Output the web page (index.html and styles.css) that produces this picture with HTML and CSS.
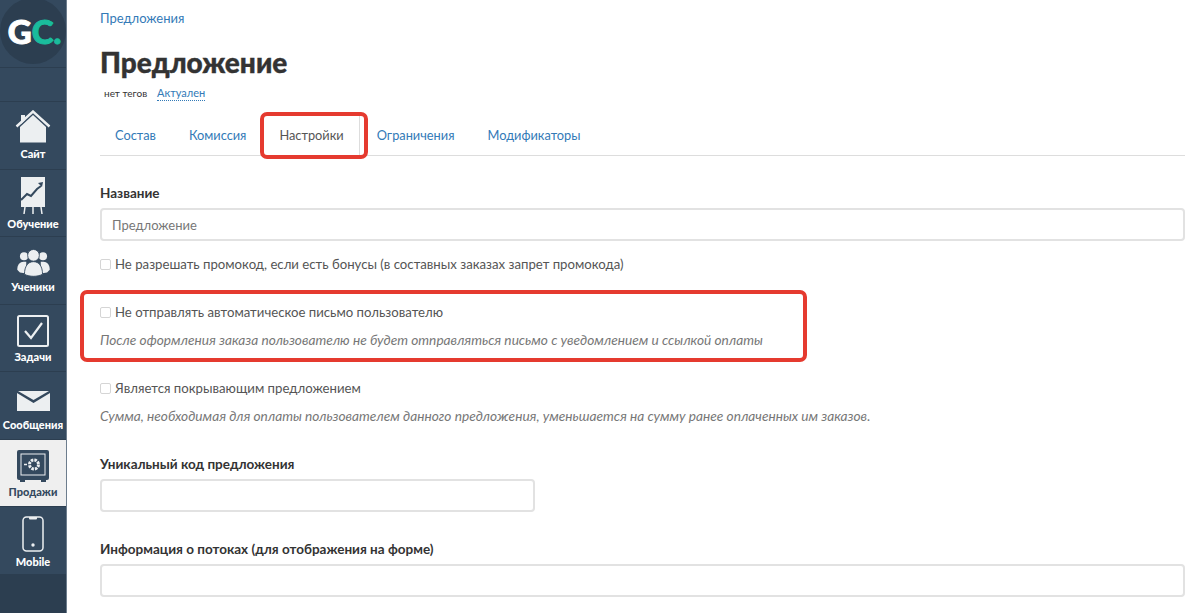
FILE: index.html
```html
<!DOCTYPE html>
<html lang="ru">
<head>
	<meta charset="utf-8">
	<title>Предложение</title>
	<link rel="stylesheet" href="styles.css">
</head>
<body>
	<nav class="sidebar">
		<div class="logo-cell">
			<div class="logo"><span class="logo-g">G</span><span class="logo-c">C.</span></div>
		</div>
		<div class="spacer-cell"></div>
		<a class="menu-item item-site">
			<svg class="menu-icon" width="36" height="34" viewBox="0 0 36 34">
				<path d="M6 5h4v5l-4 4z" fill="#eceff1"/>
				<path d="M1.500 16.500L18 1.500l16.500 15" fill="none" stroke="#eceff1" stroke-width="2.400"/>
				<path d="M5 17L18 5l13 12v15.500H5z" fill="#eceff1"/>
			</svg>
			<span>Сайт</span>
		</a>
		<a class="menu-item item-learn">
			<svg class="menu-icon" width="26" height="37" viewBox="0 0 26 37">
				<path d="M1 0h24v30H1z" fill="#eceff1"/>
				<path d="M1 23l6-6 4 2 6-7 4-3" fill="none" stroke="#34495e" stroke-width="2"/>
				<path d="M18 6l5-1-1 5z" fill="#34495e"/>
				<path d="M5 30l-1 7M13 30v7M21 30l1 7" stroke="#eceff1" stroke-width="1.500"/>
			</svg>
			<span>Обучение</span>
		</a>
		<a class="menu-item item-users">
			<svg class="menu-icon" width="33" height="28" viewBox="0 0 36 31">
				<circle cx="7.500" cy="8" r="4.500" fill="#eceff1"/>
				<circle cx="28.500" cy="8" r="4.500" fill="#eceff1"/>
				<path d="M0 23c0-6 3-9 7-9h3v13l-7-1z" fill="#eceff1"/>
				<path d="M36 23c0-6-3-9-7-9h-3v13l7-1z" fill="#eceff1"/>
				<circle cx="18" cy="7" r="6.500" fill="#eceff1" stroke="#34495e"/>
				<path d="M8 28c0-9 4-14 10-14s10 5 10 14c-6 3-14 3-20 0z" fill="#eceff1" stroke="#34495e"/>
			</svg>
			<span>Ученики</span>
		</a>
		<a class="menu-item item-tasks">
			<svg class="menu-icon" width="32" height="32" viewBox="0 0 32 32">
				<rect x="1" y="1" width="30" height="30" rx="1.500" fill="none" stroke="#eceff1" stroke-width="2"/>
				<path d="M8 16l6 7L25 8" fill="none" stroke="#eceff1" stroke-width="2.200"/>
			</svg>
			<span>Задачи</span>
		</a>
		<a class="menu-item item-mail">
			<svg class="menu-icon" width="33" height="20" viewBox="0 0 33 20">
				<path d="M1 0h31L16.500 9z" fill="#eceff1"/>
				<path d="M0 2l16.500 10L33 2v18H0z" fill="#eceff1"/>
			</svg>
			<span>Сообщения</span>
		</a>
		<a class="menu-item item-sales active">
			<svg class="menu-icon" width="32" height="32" viewBox="0 0 32 32">
				<rect width="32" height="30" rx="2" fill="#34495e"/>
				<rect x="4" y="4" width="24" height="21" fill="none" stroke="#eceff1"/>
				<circle cx="17" cy="14.500" r="4.500" fill="none" stroke="#eceff1" stroke-width="3" stroke-dasharray="2.500 1"/>
				<path d="M7 14.500h3" stroke="#eceff1" stroke-width="1.500"/>
				<path d="M3 30h5v2H3zM24 30h5v2h-5z" fill="#34495e"/>
			</svg>
			<span>Продажи</span>
		</a>
		<a class="menu-item item-mobile">
			<svg class="menu-icon" width="22" height="36" viewBox="0 0 22 36">
				<rect x="1" y="1" width="20" height="34" rx="3.500" fill="none" stroke="#eceff1" stroke-width="1.500"/>
				<path d="M7 1h8v1.500a1 1 0 0 1-1 1H8a1 1 0 0 1-1-1z" fill="#eceff1"/>
				<circle cx="11" cy="29" r="1.700" fill="#eceff1"/>
			</svg>
			<span>Mobile</span>
		</a>
		<div class="sidebar-rest"></div>
	</nav>

	<main class="content">
		<a class="breadcrumb">Предложения</a>
		<h1 class="title">Предложение</h1>
		<div class="meta">
			<span class="tags">нет тегов</span>
			<a class="status">Актуален</a>
		</div>

		<ul class="tabs">
			<li><a>Состав</a></li>
			<li><a>Комиссия</a></li>
			<li class="active"><a>Настройки</a></li>
			<li><a>Ограничения</a></li>
			<li><a>Модификаторы</a></li>
		</ul>

		<form class="form">
			<div class="field name-field">
				<label class="field-label">Название</label>
				<input class="text-input" type="text" value="Предложение">
			</div>
			<label class="check promo-check"><input type="checkbox"><span>Не разрешать промокод, если есть бонусы (в составных заказах запрет промокода)</span></label>

			<div class="option mail-option">
				<label class="check"><input type="checkbox"><span>Не отправлять автоматическое письмо пользователю</span></label>
				<p class="hint">После оформления заказа пользователю не будет отправляться письмо с уведомлением и ссылкой оплаты</p>
			</div>

			<div class="option cover-option">
				<label class="check"><input type="checkbox"><span>Является покрывающим предложением</span></label>
				<p class="hint">Сумма, необходимая для оплаты пользователем данного предложения, уменьшается на сумму ранее оплаченных им заказов.</p>
			</div>

			<div class="field code-field">
				<label class="field-label">Уникальный код предложения</label>
				<input class="text-input short" type="text">
			</div>
			<div class="field flow-field">
				<label class="field-label">Информация о потоках (для отображения на форме)</label>
				<input class="text-input" type="text">
			</div>
		</form>
	</main>

	<!-- red marks drawn over the screenshot -->
	<div class="mark mark-tab"></div>
	<div class="mark mark-option"></div>
</body>
</html>
```

FILE: styles.css
```css
* {
	box-sizing: border-box;
}

html, body {
	height: 100%;
}

body {
	margin: 0;
	display: flex;
	overflow: hidden;
	background: #fff;
	color: #333;
	font-family: "Lato", "Open Sans", sans-serif;
	font-size: 14px;
}

a {
	color: #337ab7;
	text-decoration: none;
}

/* sidebar */
.sidebar {
	flex: 0 0 67px;
	width: 67px;
	height: 613px;
	display: flex;
	flex-direction: column;
	background: #34495e;
	border-right: 1px solid #6d7d8d;
}

.logo-cell {
	height: 68px;
	border-bottom: 1px solid #2c3e50;
	overflow: hidden;
	flex: none;
}

.logo {
	width: 66px;
	height: 66px;
	margin-top: -2px;
	padding-left: 3px;
	border-radius: 50%;
	background: #2c3e50;
	display: flex;
	align-items: center;
	justify-content: center;
	font-size: 33px;
	font-weight: 900;
	-webkit-text-stroke: 1px;
}

.logo-g {
	color: #fff;
}

.logo-c {
	color: #1abc9c;
}

.spacer-cell {
	height: 34px;
	border-bottom: 1px solid #2c3e50;
	flex: none;
}

.menu-item {
	height: 67.500px;
	flex: none;
	display: flex;
	flex-direction: column;
	align-items: center;
	justify-content: flex-end;
	padding-bottom: 8px;
	border-bottom: 1px solid #2c3e50;
	color: #fff;
	font-size: 11px;
	font-weight: 900;
	line-height: 13px;
	white-space: nowrap;
}

.item-site {
	padding-bottom: 9px;
}

.item-learn,
.item-mobile {
	padding-bottom: 6px;
}

.item-users {
	padding-bottom: 11px;
}

.menu-icon {
	margin-bottom: 3px;
}

.item-mail .menu-icon {
	margin-bottom: 7px;
}

.menu-item.active {
	background: #efefef;
	color: #34495e;
}

.sidebar-rest {
	flex: 1;
	background: #2c3e50;
}

/* content */
.content {
	flex: 1;
	min-width: 0;
	padding: 10px 14px 0 33px;
}

.breadcrumb {
	display: block;
	font-size: 13px;
	line-height: 16px;
}

.title {
	margin: 19px 0 0;
	font-size: 28px;
	font-weight: 900;
	line-height: 34px;
	color: #333;
	-webkit-text-stroke: 0.4px;
}

.meta {
	display: flex;
	align-items: baseline;
	margin-top: 6px;
	padding-left: 4px;
	font-size: 10px;
	line-height: 15px;
}

.tags {
	color: #333;
}

.status {
	margin-left: 10px;
	border-bottom: 1px dotted #337ab7;
	font-size: 11px;
}

.tabs {
	display: flex;
	margin: 11px 0 0;
	padding: 0;
	list-style: none;
	height: 44px;
	border-bottom: 1px solid #ddd;
}

.tabs li {
	height: 44px;
}

.tabs a {
	display: block;
	padding: 14px 15px 0;
	margin-right: 3px;
	height: 44px;
	font-size: 12.800px;
	line-height: 18px;
}

.tabs li.active a {
	color: #555;
	background: #fff;
	border-right: 1px solid #ddd;
	border-bottom: 1px solid #fff;
	margin-right: 2px;
}

.field-label {
	display: block;
	font-weight: 700;
	font-size: 13.500px;
	line-height: 18px;
	margin-bottom: 6px;
}

.name-field {
	margin-top: 28px;
}

.text-input {
	display: block;
	width: 100%;
	height: 33px;
	padding: 0 10px;
	border: 2px solid #e2e2e2;
	border-radius: 4px;
	background: #fff;
	font: inherit;
	font-size: 13px;
	color: #777;
}

.text-input.short {
	width: 435px;
}

.check {
	display: flex;
	align-items: center;
	font-size: 13.200px;
	line-height: 18px;
	color: #555;
}

.check input {
	appearance: none;
	width: 11px;
	height: 11px;
	margin: 0 4px 0 0;
	border: 1px solid #d5d5d5;
	border-radius: 2px;
	background: #fff;
	flex: none;
}

.promo-check {
	margin-top: 14px;
}

.hint {
	margin: 10px 0 0;
	font-size: 13.700px;
	font-style: italic;
	line-height: 18px;
	color: #777;
}

.mail-option,
.cover-option,
.code-field {
	margin-top: 30px;
}

.flow-field {
	margin-top: 28px;
}

/* red marks */
.mark {
	position: absolute;
	border: 4px solid #e53a2f;
	border-radius: 7px;
}

.mark-tab {
	left: 260px;
	top: 112px;
	width: 108px;
	height: 47px;
}

.mark-option {
	left: 80px;
	top: 290px;
	width: 727px;
	height: 72px;
}
```
